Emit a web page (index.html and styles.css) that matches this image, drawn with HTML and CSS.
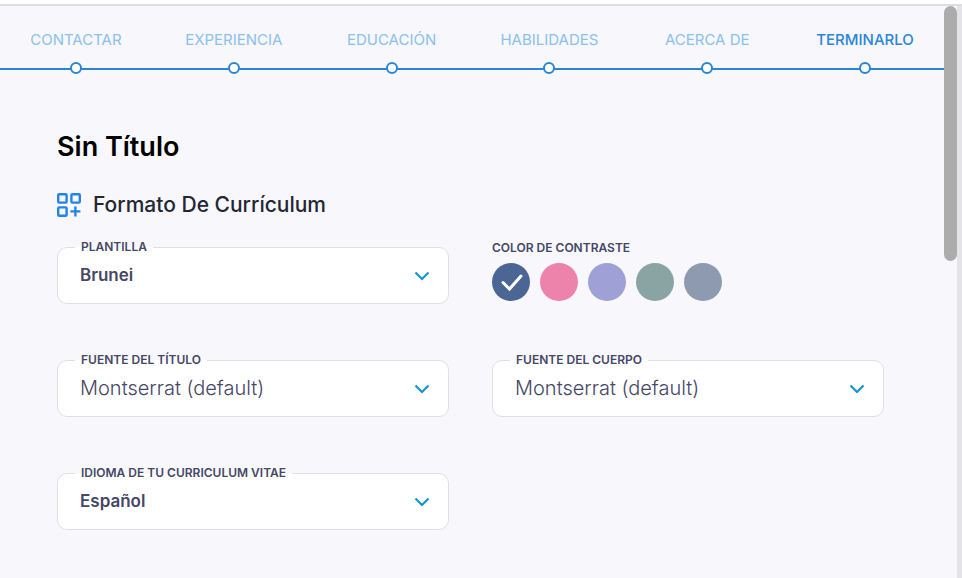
FILE: index.html
```html
<!DOCTYPE html>
<html lang="es">
<head>
  <meta charset="UTF-8">
  <meta name="viewport" content="width=device-width, initial-scale=1.0">
  <title>Formato De Currículum</title>
  <link rel="stylesheet" href="styles.css">
</head>
<body>
  <div class="page">
    <div class="content">
      <nav>
        <ol class="steps">
          <li><a href="#contactar">CONTACTAR</a></li>
          <li><a href="#experiencia">EXPERIENCIA</a></li>
          <li><a href="#educacion">EDUCACIÓN</a></li>
          <li><a href="#habilidades">HABILIDADES</a></li>
          <li><a href="#acerca">ACERCA DE</a></li>
          <li><a class="active" href="#terminarlo">TERMINARLO</a></li>
        </ol>
      </nav>

      <main>
        <h1>Sin Título</h1>
        <h2>
          <svg width="24" height="24" viewBox="0 0 24 24" fill="none" stroke="#2383e8" stroke-width="2.4" aria-hidden="true">
            <rect x="1.2" y="1.2" width="8.4" height="8.4" rx="1"/>
            <rect x="14.4" y="1.2" width="8.4" height="8.4" rx="1"/>
            <rect x="1.2" y="14.4" width="8.4" height="8.4" rx="1"/>
            <path d="M18.4 13.4v10M13.4 18.4h10"/>
          </svg>
          Formato De Currículum
        </h2>

        <form class="options">
          <div class="field">
            <label for="template">PLANTILLA</label>
            <select id="template">
              <option>Brunei</option>
            </select>
            <svg class="arrow" viewBox="0 0 16 10" aria-hidden="true"><path d="M1.5 1.5L8 8l6.500-6.500"/></svg>
          </div>

          <fieldset class="colors">
            <legend>COLOR DE CONTRASTE</legend>
            <div class="swatches">
              <input class="navy" type="radio" name="color" aria-label="Azul" checked>
              <input class="pink" type="radio" name="color" aria-label="Rosa">
              <input class="lilac" type="radio" name="color" aria-label="Lila">
              <input class="green" type="radio" name="color" aria-label="Verde">
              <input class="gray" type="radio" name="color" aria-label="Gris">
              <svg class="check" viewBox="0 0 38 38" aria-hidden="true"><path d="M11 19.500l6.500 6.500L29 13"/></svg>
            </div>
          </fieldset>

          <div class="field light">
            <label for="titleFont">FUENTE DEL TÍTULO</label>
            <select id="titleFont">
              <option>Montserrat (default)</option>
            </select>
            <svg class="arrow" viewBox="0 0 16 10" aria-hidden="true"><path d="M1.500 1.500L8 8l6.500-6.500"/></svg>
          </div>

          <div class="field light">
            <label for="bodyFont">FUENTE DEL CUERPO</label>
            <select id="bodyFont">
              <option>Montserrat (default)</option>
            </select>
            <svg class="arrow" viewBox="0 0 16 10" aria-hidden="true"><path d="M1.500 1.500L8 8l6.500-6.500"/></svg>
          </div>

          <div class="field">
            <label for="language">IDIOMA DE TU CURRICULUM VITAE</label>
            <select id="language">
              <option>Español</option>
            </select>
            <svg class="arrow" viewBox="0 0 16 10" aria-hidden="true"><path d="M1.500 1.500L8 8l6.500-6.500"/></svg>
          </div>
        </form>
      </main>
    </div>
    <div class="scrollbar"><div class="thumb"></div></div>
  </div>
</body>
</html>
```
FILE: styles.css
```css
*,
*::after {
  box-sizing: border-box;
}
body {
  font-family: Inter, "Open Sans", sans-serif;
  background-color: #f7f7fc;
  margin: 0;
  color: #454766;
  border-top: 4px solid #fff;
}
.page {
  display: flex;
  min-height: calc(100vh - 4px);
  border-top: 2px solid #dedee0;
}
.content {
  flex: 1;
  min-width: 0;
  overflow: hidden;
}

/* steps */
.steps {
  display: grid;
  grid-template-columns: repeat(6, 1fr);
  list-style: none;
  margin: 0 0 0 -3px;
  padding: 24px 0 0;
}
.steps li {
  text-align: center;
  background: linear-gradient(#2a85d8, #2a85d8) 0 38px / 100% 2px no-repeat;
}
.steps a {
  display: block;
  font-size: 15px;
  line-height: 20px;
  color: #8cc1ec;
  text-decoration: none;
}
.steps a.active {
  color: #2a85d8;
  font-weight: 500;
}
.steps a::after {
  content: "";
  display: block;
  width: 12px;
  height: 12px;
  margin: 12px auto 0;
  border: 2px solid #2a85d8;
  border-radius: 50%;
  background: #fff;
}

main {
  padding: 57px 60px 48px 57px;
}
h1 {
  margin: 0;
  font-size: 27px;
  line-height: 32px;
  font-weight: 600;
  color: #000;
}
h2 {
  display: flex;
  align-items: center;
  gap: 12px;
  margin: 30px 0;
  font-size: 21px;
  line-height: 24px;
  font-weight: 500;
  color: #232733;
}

.options {
  display: grid;
  grid-template-columns: 1fr 1fr;
  gap: 56px 43px;
}
.field {
  position: relative;
}
.field label {
  position: absolute;
  left: 18px;
  top: -8px;
  padding: 0 6px;
  background: linear-gradient(#f7f7fc 50%, #fff 50%);
}
.field label,
.colors legend {
  font-size: 12px;
  line-height: 16px;
  font-weight: 600;
}
.field select {
  display: block;
  appearance: none;
  width: 100%;
  height: 57px;
  padding: 0 48px 2px 22px;
  border: 1px solid #dfdfe6;
  border-radius: 10px;
  background: #fff;
  color: #454766;
  font-family: inherit;
  font-size: 17px;
  font-weight: 600;
}
.field.light select {
  font-size: 20px;
  font-weight: 300;
}
.arrow {
  position: absolute;
  right: 19px;
  top: 24px;
  width: 16px;
  height: 10px;
  fill: none;
  stroke: #1496cc;
  stroke-width: 2.2;
  pointer-events: none;
}

.colors {
  margin: -7px 0 0;
  padding: 0;
  border: 0;
}
.colors legend {
  padding: 0;
}
.swatches {
  position: relative;
  display: flex;
  gap: 10px;
  margin-top: 7px;
}
.swatches input {
  appearance: none;
  width: 38px;
  height: 38px;
  margin: 0;
  border-radius: 50%;
}
.navy { background: #4b6694; }
.pink { background: #ed82ab; }
.lilac { background: #9fa1d6; }
.green { background: #89a4a3; }
.gray { background: #8d9aaf; }
.check {
  position: absolute;
  left: 0;
  top: 0;
  width: 38px;
  height: 38px;
  fill: none;
  stroke: #fff;
  stroke-width: 3;
  stroke-linecap: round;
  pointer-events: none;
}

.scrollbar {
  width: 18px;
  border-right: 5px solid #e4e4e8;
}
.thumb {
  height: 255px;
  border-radius: 7px;
  background: #acacac;
}
```
